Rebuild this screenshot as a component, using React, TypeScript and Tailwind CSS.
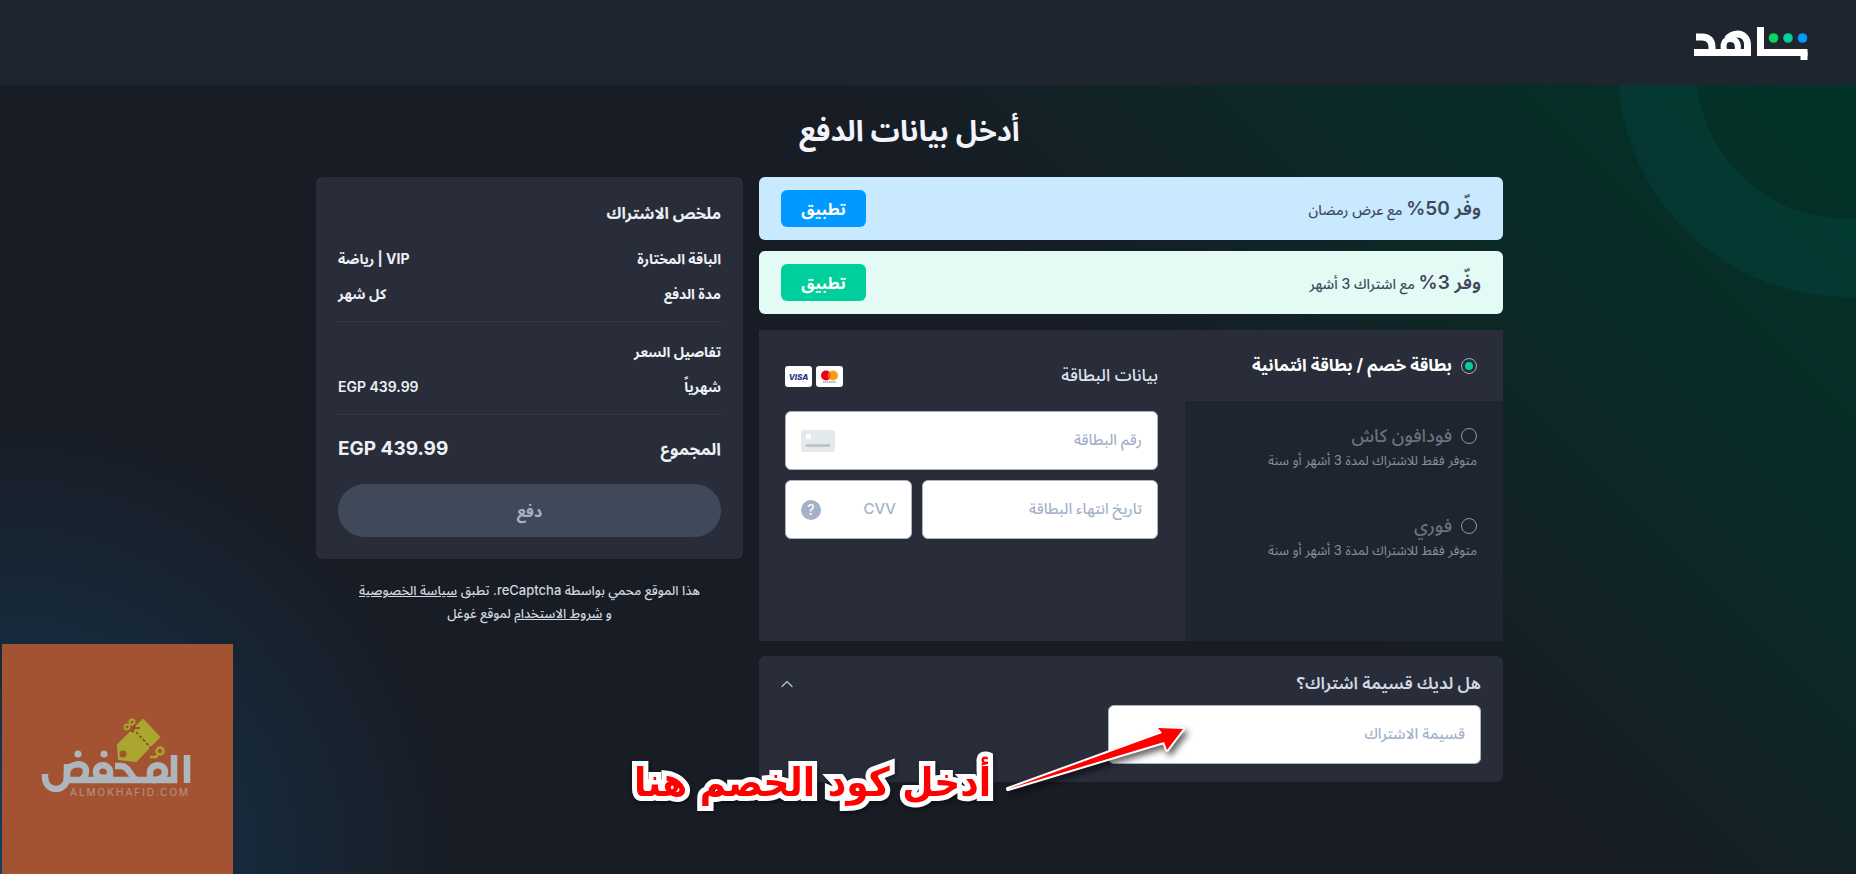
import { ChevronUp } from 'lucide-react'
import { clsx } from 'clsx'

const offers = [
  { amount: 'وفّر 50%', text: 'مع عرض رمضان', box: 'bg-[#c9e9ff]', button: 'bg-[#0099ff]' },
  { amount: 'وفّر 3%', text: 'مع اشتراك 3 أشهر', box: 'bg-[#e4faf5]', button: 'bg-[#00ce9b]' },
]

const otherMethods = [
  { id: 'vodafone', name: 'فودافون كاش', note: 'متوفر فقط للاشتراك لمدة 3 أشهر أو سنة' },
  { id: 'fawry', name: 'فوري', note: 'متوفر فقط للاشتراك لمدة 3 أشهر أو سنة' },
]

function ShahidLogo() {
  return (
    <svg viewBox="0 0 114 33" className="h-[33px] w-[114px]" role="img" aria-label="شاهد">
      <g fill="none" stroke="#fff" strokeWidth="7">
        <path d="M2 10 H8 C15 10 18 14 18 20 V25" />
        <path d="M0 25.5 H57" />
        <path d="M53.5 29 V18 C53.5 11 49 7 43.5 7 C39 7 36 9 33 12" />
        <path d="M33 26 C28 23 28 12 36 12 C44 12 45 19 43 26" strokeWidth="6" />
        <path d="M66.5 0 V25.5 H113.5" />
      </g>
      <rect x="106.5" y="25" width="7" height="8" fill="#fff" />
      <circle cx="79.5" cy="11" r="4.8" fill="#0bd65c" />
      <circle cx="94" cy="11" r="4.8" fill="#00ce9b" />
      <circle cx="108.5" cy="11" r="4.8" fill="#0099ff" />
    </svg>
  )
}

function Rings() {
  return (
    <svg
      viewBox="0 0 240 212"
      className="pointer-events-none absolute right-0 top-0 h-[212px] w-[240px]"
      aria-hidden="true"
    >
      <circle cx="231" cy="-17" r="190" fill="none" stroke="#06605f" strokeOpacity=".2" strokeWidth="78" />
    </svg>
  )
}

function VisaIcon() {
  return (
    <svg viewBox="0 0 27 21" className="h-[21px] w-[27px]" role="img" aria-label="Visa">
      <rect width="27" height="21" rx="3" fill="#fff" />
      <text x="13.5" y="13.5" textAnchor="middle" fontSize="8" fontStyle="italic" fontWeight="800" fill="#2b3a8c">
        VISA
      </text>
    </svg>
  )
}

function MastercardIcon() {
  return (
    <svg viewBox="0 0 27 21" className="h-[21px] w-[27px]" role="img" aria-label="Mastercard">
      <rect width="27" height="21" rx="3" fill="#fff" />
      <circle cx="10" cy="9.5" r="5" fill="#eb001b" />
      <circle cx="17" cy="9.5" r="5" fill="#f79e1b" />
      <path d="M13.5 5.9a5 5 0 0 1 0 7.2a5 5 0 0 1 0-7.2z" fill="#ff5f00" />
      <path d="M7 16H20" stroke="#777" strokeWidth="1" strokeDasharray="1.5 .4" />
    </svg>
  )
}

function CardPlaceholder() {
  return (
    <svg viewBox="0 0 34 22" className="h-[22px] w-[34px] shrink-0" aria-hidden="true">
      <rect width="34" height="22" rx="3" fill="#e4e9ec" />
      <rect x="5" y="4" width="5" height="5" rx="1" fill="#fff" />
      <rect x="5" y="14" width="24" height="3" fill="#bcc7cc" />
    </svg>
  )
}

function Arrow() {
  return (
    <svg
      viewBox="0 0 200 80"
      className="absolute bottom-[-18px] left-[240px] h-[80px] w-[200px] drop-shadow-[3px_4px_3px_rgba(0,0,0,0.6)]"
      aria-hidden="true"
    >
      <path
        d="M9 69 L165 22 L168 30 L184 9 L159 8 L163 13 Z"
        fill="#f00"
        stroke="#fff"
        strokeWidth="4"
        strokeLinejoin="round"
        paintOrder="stroke"
      />
    </svg>
  )
}

function Watermark() {
  return (
    <div className="absolute bottom-0 left-[2px] h-[230px] w-[231px] bg-[#a35331]">
      <svg viewBox="0 0 231 230" className="size-full" role="img" aria-label="المخفض">
        <g fill="none" stroke="#aeb6bd" strokeWidth="6.5">
          <path d="M185 111 V139" />
          <path d="M172 111 V136 H64" />
          <path d="M43 130 V133 C43 149 65 149 65 133 V120" />
          <path d="M65 136 V128 C67 119 84 117 84 127 C84 131 82 134 79 136" />
          <path d="M108 136 V128 C108 120 94 118 94 128 C94 133 99 135 107 133" />
          <path d="M113 122 H119 C127 122 128 132 134 136" />
          <path d="M148 137 V128 C149 119 163 119 163 128 C163 133 158 136 150 136" />
        </g>
        <circle cx="76" cy="110" r="3.5" fill="#aeb6bd" />
        <circle cx="102" cy="110" r="3.5" fill="#aeb6bd" />
        <path d="M141 76 L157 93 L134 117 L117 115 L116 101 Z" fill="#a9a72f" stroke="#a9a72f" strokeWidth="2" />
        <circle cx="121" cy="110" r="3.5" fill="#a35331" />
        <path d="M134 88 L149 104" stroke="#8f3f20" strokeWidth="1.5" strokeDasharray="3 2" />
        <path d="M131 88 L133 80 M131 88 L126 84 M131 84 L138 84" stroke="#8f3f20" strokeWidth="1.5" />
        <g fill="none" stroke="#a9a72f" strokeWidth="1.8">
          <circle cx="130" cy="78" r="2.5" />
          <circle cx="125" cy="83" r="2.5" />
          <circle cx="158" cy="107" r="3.5" strokeWidth="2.5" />
          <path d="M148 113 H154 L157 109" strokeWidth="2.5" />
        </g>
        <text x="68" y="152" fontSize="10" direction="ltr" className="tracking-[2px]" fill="#b3968a">
          ALMOKHAFID.COM
        </text>
      </svg>
    </div>
  )
}

function Summary() {
  return (
    <aside>
      <section className="rounded-md bg-[#282d39] px-[22px] pt-5 pb-[22px] text-[#eef0f6]">
        <h2 className="text-base leading-8 font-bold">ملخص الاشتراك</h2>
        <dl className="mt-3 text-sm leading-[35px] font-bold">
          <div className="flex justify-between">
            <dt>الباقة المختارة</dt>
            <dd>VIP | رياضة</dd>
          </div>
          <div className="flex justify-between">
            <dt>مدة الدفع</dt>
            <dd>كل شهر</dd>
          </div>
        </dl>
        <div className="mt-[10px] border-t border-[#323a48] pt-3 text-sm leading-[35px] font-bold">
          <h3>تفاصيل السعر</h3>
          <div className="flex justify-between">
            <span>شهرياً</span>
            <span dir="ltr" className="font-semibold">EGP 439.99</span>
          </div>
        </div>
        <div className="mt-[10px] flex items-center justify-between border-t border-[#323a48] pt-4 font-bold">
          <span className="text-[17px] leading-9">المجموع</span>
          <span dir="ltr" className="text-[19px] leading-9">EGP 439.99</span>
        </div>
        <button
          type="button"
          disabled
          className="mt-[17px] h-[53px] w-full rounded-full bg-[#3f495a] text-base font-bold text-[#a3b1c6]"
        >
          دفع
        </button>
      </section>
      <p className="mt-5 text-center text-[13px] leading-[23px] font-medium text-[#d2d6df]">
        هذا الموقع محمي بواسطة reCaptcha. تطبق{' '}
        <a href="#privacy" className="underline">سياسة الخصوصية</a>
        <br />و <a href="#terms" className="underline">شروط الاستخدام</a> لموقع غوغل
      </p>
    </aside>
  )
}

function Methods() {
  return (
    <div className="flex w-[318px] shrink-0 flex-col bg-[#1f252f]">
      <label className="flex h-[71px] items-center gap-[9px] bg-[#282d39] pr-[26px] text-[17px] font-bold text-white">
        <input
          type="radio"
          name="method"
          defaultChecked
          className="size-4 appearance-none rounded-full border border-[#a3b1c6] p-[3px] checked:bg-[#00ce9b] checked:bg-clip-content"
        />
        بطاقة خصم / بطاقة ائتمانية
      </label>
      {otherMethods.map((m) => (
        <div key={m.id} className="h-[90px] border-b border-[#212731] pt-5 pr-[26px] last:border-0">
          <label className="flex items-center gap-[9px] text-lg leading-[30px] font-medium text-[#6b7280]">
            <input
              type="radio"
              name="method"
              disabled
              className="size-4 appearance-none rounded-full border border-[#8d97aa]"
            />
            {m.name}
          </label>
          <p className="text-[13px] leading-[18px] text-[#8b909a]">{m.note}</p>
        </div>
      ))}
    </div>
  )
}

const inputBox =
  'flex h-[59px] items-center rounded-md border border-[#a9b3c2] bg-white px-[15px]'
const inputText =
  'w-full min-w-0 bg-transparent text-right text-[15px] text-[#282d39] outline-none placeholder:font-medium placeholder:text-[#a3b1c9]'

function CardForm() {
  return (
    <form className="flex-1 pt-[34px] pr-[27px] pl-[26px]">
      <div className="flex h-[24px] items-center justify-between">
        <h2 className="text-[17px] font-medium text-[#dfe3ec]">بيانات البطاقة</h2>
        <div className="flex gap-1">
          <MastercardIcon />
          <VisaIcon />
        </div>
      </div>
      <div className={clsx(inputBox, 'mt-[23px]')}>
        <input aria-label="رقم البطاقة" placeholder="رقم البطاقة" className={inputText} />
        <CardPlaceholder />
      </div>
      <div className="mt-[10px] flex gap-[10px]">
        <div className={clsx(inputBox, 'flex-1')}>
          <input aria-label="تاريخ انتهاء البطاقة" placeholder="تاريخ انتهاء البطاقة" className={inputText} />
        </div>
        <div className={clsx(inputBox, 'w-[127px]')}>
          <input aria-label="CVV" placeholder="CVV" className={inputText} />
          <button
            type="button"
            aria-label="ما هو CVV"
            className="size-5 shrink-0 rounded-full bg-[#a3b1c9] text-sm leading-5 font-medium text-white"
          >
            ?
          </button>
        </div>
      </div>
    </form>
  )
}

function Coupon() {
  return (
    <section className="relative mt-[15px] h-[126px] rounded-md bg-[#282d39] px-[22px] pt-3">
      <button type="button" className="flex h-8 w-full items-center justify-between text-[17px] font-semibold text-[#d2d8e6]">
        هل لديك قسيمة اشتراك؟
        <ChevronUp className="-ml-[4px] size-5 text-[#b4bfd0]" strokeWidth={1.5} />
      </button>
      <div className={clsx(inputBox, 'mt-[5px] w-[373px]')}>
        <input aria-label="قسيمة الاشتراك" placeholder="قسيمة الاشتراك" className={inputText} />
      </div>
      <Arrow />
      <p className="absolute bottom-[-38px] left-[-120px] w-[352px] text-center font-['DejaVu_Sans_Condensed','DejaVu_Sans',sans-serif] text-[40px] leading-[76px] font-bold whitespace-nowrap text-[#f00] drop-shadow-[1px_2px_2px_rgba(0,0,0,0.5)] [-webkit-text-stroke:10px_white] [paint-order:stroke_fill]">
        أدخل كود الخصم هنا
      </p>
    </section>
  )
}

export default function App() {
  return (
    <div
      dir="rtl"
      className="relative flex min-h-screen flex-col overflow-hidden bg-[#181c25] font-['Inter','Noto_Sans_Arabic',sans-serif]"
    >
      <header className="flex h-[85px] items-center bg-[#1f252f] px-12 pt-0.5">
        <ShahidLogo />
      </header>
      <main className="relative flex-1 bg-[radial-gradient(circle_at_0%_100%,#17405f_0px,#162b3d_220px,#181c2500_460px),linear-gradient(225deg,#003427_0%,#0b2927_20%,#181c25_39%)] pb-8">
        <Rings />
        <div className="relative mr-[353px] w-[64%] max-w-[1187px]">
          <h1 className="pt-6 text-center text-[29px] leading-[44px] font-bold text-[#f3f4fa]">
            أدخل بيانات الدفع
          </h1>
          <div className="mt-6 flex items-start gap-4">
            <div className="min-w-0 flex-1">
              {offers.map((o) => (
                <div
                  key={o.amount}
                  className={clsx('mb-[11px] flex h-[63px] items-center justify-between rounded-md px-[22px]', o.box)}
                >
                  <p className="text-sm font-medium text-[#3f495a]">
                    <strong className="text-[19px] font-semibold">{o.amount}</strong> {o.text}
                  </p>
                  <button
                    type="button"
                    className={clsx('h-[37px] w-[85px] rounded-md text-base font-bold text-white', o.button)}
                  >
                    تطبيق
                  </button>
                </div>
              ))}
              <section className="mt-4 flex min-h-[311px] bg-[#282d39]">
                <Methods />
                <CardForm />
              </section>
              <Coupon />
            </div>
            <div className="w-[427px] shrink-0">
              <Summary />
            </div>
          </div>
        </div>
      </main>
      <Watermark />
    </div>
  )
}
